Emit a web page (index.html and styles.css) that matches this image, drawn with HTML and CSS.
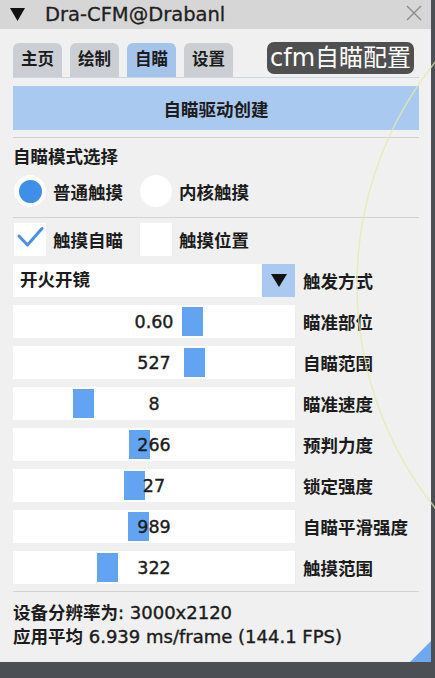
FILE: index.html
```html
<!DOCTYPE html>
<html lang="zh-CN">
<head>
    <meta charset="UTF-8">
    <meta name="viewport" content="width=device-width, initial-scale=1.0">
    <title>Dra-CFM@Drabanl</title>
    <link rel="stylesheet" href="styles.css">
</head>
<body>
    <div class="window">
        <div class="titlebar">
            <svg class="collapse" width="15" height="13" viewBox="0 0 15 13"><polygon points="0,0 15,0 7.5,13" fill="#111"/></svg>
            <span class="title">Dra-CFM@Drabanl</span>
            <svg class="close" width="16" height="16" viewBox="0 0 16 16"><path d="M1 1 L15 15 M15 1 L1 15" stroke="#8c8c8c" stroke-width="1.4"/></svg>
        </div>
        <div class="content">
            <div class="tabs">
                <div class="tab">主页</div>
                <div class="tab">绘制</div>
                <div class="tab active">自瞄</div>
                <div class="tab">设置</div>
            </div>
            <button class="wide-btn">自瞄驱动创建</button>
            <div class="sep"></div>
            <div class="heading">自瞄模式选择</div>
            <div class="row radios">
                <div class="radio on"><span class="dot"></span></div>
                <span class="opt">普通触摸</span>
                <div class="radio"></div>
                <span class="opt">内核触摸</span>
            </div>
            <div class="sep after-radios"></div>
            <div class="row checks">
                <div class="box"><svg width="32" height="33" viewBox="0 0 32 33"><path d="M5 13 L13.5 22 L28 5.5" fill="none" stroke="#4a8fe2" stroke-width="3" stroke-linecap="round" stroke-linejoin="round"/></svg></div>
                <span class="opt">触摸自瞄</span>
                <div class="box"></div>
                <span class="opt">触摸位置</span>
            </div>
            <div class="control">
                <div class="combo">
                    <span class="combo-text">开火开镜</span>
                    <div class="combo-arrow"><svg width="16" height="13" viewBox="0 0 16 13"><polygon points="0,0 16,0 8,13" fill="#111"/></svg></div>
                </div>
                <span class="label">触发方式</span>
            </div>
            <div class="control">
                <div class="slider"><div class="grab" style="left:169px"></div><span class="value">0.60</span></div>
                <span class="label">瞄准部位</span>
            </div>
            <div class="control">
                <div class="slider"><div class="grab" style="left:171px"></div><span class="value">527</span></div>
                <span class="label">自瞄范围</span>
            </div>
            <div class="control">
                <div class="slider"><div class="grab" style="left:60px"></div><span class="value">8</span></div>
                <span class="label">瞄准速度</span>
            </div>
            <div class="control">
                <div class="slider"><div class="grab" style="left:116px"></div><span class="value">266</span></div>
                <span class="label">预判力度</span>
            </div>
            <div class="control">
                <div class="slider"><div class="grab" style="left:111px"></div><span class="value">27</span></div>
                <span class="label">锁定强度</span>
            </div>
            <div class="control">
                <div class="slider"><div class="grab" style="left:115px"></div><span class="value">989</span></div>
                <span class="label">自瞄平滑强度</span>
            </div>
            <div class="control">
                <div class="slider"><div class="grab" style="left:84px"></div><span class="value">322</span></div>
                <span class="label">触摸范围</span>
            </div>
            <div class="sep after-sliders"></div>
            <div class="info">
                <div>设备分辨率为<span class="num">: 3000x2120</span></div>
                <div>应用平均<span class="num"> 6.939 ms/frame (144.1 FPS)</span></div>
            </div>
        </div>
        <div class="tag">cfm自瞄配置</div>
        <div class="grip"></div>
    </div>
    <svg class="fov" width="435" height="678" viewBox="0 0 435 678"><circle cx="714" cy="285" r="357" fill="none" stroke="#e2ebae" stroke-width="1.5" opacity="0.75"/></svg>
</body>
</html>
```

FILE: styles.css
```css
body {
    margin: 0;
    padding: 0;
    width: 435px;
    height: 678px;
    overflow: hidden;
    position: relative;
    background-color: #4c4f53;
    font-family: "DejaVu Sans", "Noto Sans CJK SC", sans-serif;
    font-size: 17.5px;
    font-weight: 700;
    color: #1c1c1c;
}
.window {
    position: relative;
    width: 431px;
    height: 662px;
    background-color: #f0f0f0;
}
.titlebar {
    height: 29px;
    background-color: #d6d6d6;
    display: flex;
    align-items: center;
}
.collapse {
    margin-left: 10px;
}
.title {
    margin-left: 20px;
    font-size: 19.5px;
    font-weight: 400;
    color: #202020;
    -webkit-text-stroke: 0.3px #202020;
}
.close {
    margin-left: auto;
    margin-right: 9px;
    margin-top: -4px;
}
.content {
    display: flex;
    flex-direction: column;
    padding: 0 12px 0 13px;
}
.tabs {
    display: flex;
    gap: 8px;
    margin-top: 14px;
    height: 34px;
    border-bottom: 1px solid #cdd7e4;
}
.tab {
    padding: 0 8px;
    line-height: 34px;
    font-size: 16.5px;
    background-color: #cbcfd4;
    border-radius: 6px 6px 0 0;
}
.tab.active {
    background-color: #a4c4ec;
}
.wide-btn {
    margin-top: 8px;
    height: 44px;
    border: none;
    background-color: #a9c9f1;
    font: inherit;
    color: #1c1c1c;
}
.sep {
    margin-top: 7px;
    height: 1px;
    background-color: #d2d2d2;
}
.sep.after-radios {
    margin-top: 10px;
}
.heading {
    margin-top: 7px;
    line-height: 24px;
}
.row {
    display: flex;
    align-items: center;
}
.radios {
    margin-top: 6px;
    height: 32px;
    padding-left: 1px;
}
.radio {
    width: 32px;
    height: 32px;
    border-radius: 50%;
    background-color: #fff;
    display: flex;
    align-items: center;
    justify-content: center;
}
.dot {
    width: 23px;
    height: 23px;
    border-radius: 50%;
    background-color: #3f8fe9;
}
.opt {
    margin: 0 17px 0 7px;
}
.checks {
    margin-top: 5px;
    height: 33px;
    padding-left: 1px;
}
.box {
    width: 32px;
    height: 33px;
    background-color: #fff;
}
.box svg {
    display: block;
}
.control {
    display: flex;
    align-items: center;
    margin-top: 8px;
    height: 33px;
}
.combo {
    width: 282px;
    height: 33px;
    display: flex;
    background-color: #fff;
}
.combo-text {
    flex: 1;
    padding-left: 7px;
    line-height: 33px;
}
.combo-arrow {
    width: 33px;
    background-color: #a9c9f1;
    display: flex;
    align-items: center;
    justify-content: center;
}
.label {
    margin-left: 8px;
}
.slider {
    position: relative;
    width: 282px;
    height: 33px;
    background-color: #fff;
    display: flex;
    align-items: center;
    justify-content: center;
}
.grab {
    position: absolute;
    top: 2px;
    bottom: 2px;
    width: 21px;
    background-color: #62a4f2;
}
.value {
    position: relative;
    font-weight: 400;
    -webkit-text-stroke: 0.4px #1c1c1c;
}
.sep.after-sliders {
    margin-top: 7px;
}
.info {
    margin-top: 9px;
    line-height: 23px;
}
.num {
    font-size: 18px;
    font-weight: 400;
    -webkit-text-stroke: 0.4px #1c1c1c;
}
.tag {
    position: absolute;
    left: 267px;
    top: 42px;
    height: 32px;
    padding: 0 3px;
    line-height: 32px;
    font-size: 24px;
    font-weight: 400;
    color: #fff;
    background-color: rgba(68, 68, 68, 0.93);
    border-radius: 7px;
}
.grip {
    position: absolute;
    right: 0;
    bottom: 0;
    width: 21px;
    height: 21px;
    background-color: #6ea8ee;
    clip-path: polygon(100% 0, 100% 100%, 0 100%);
}
.fov {
    position: absolute;
    left: 0;
    top: 0;
    pointer-events: none;
}
```
